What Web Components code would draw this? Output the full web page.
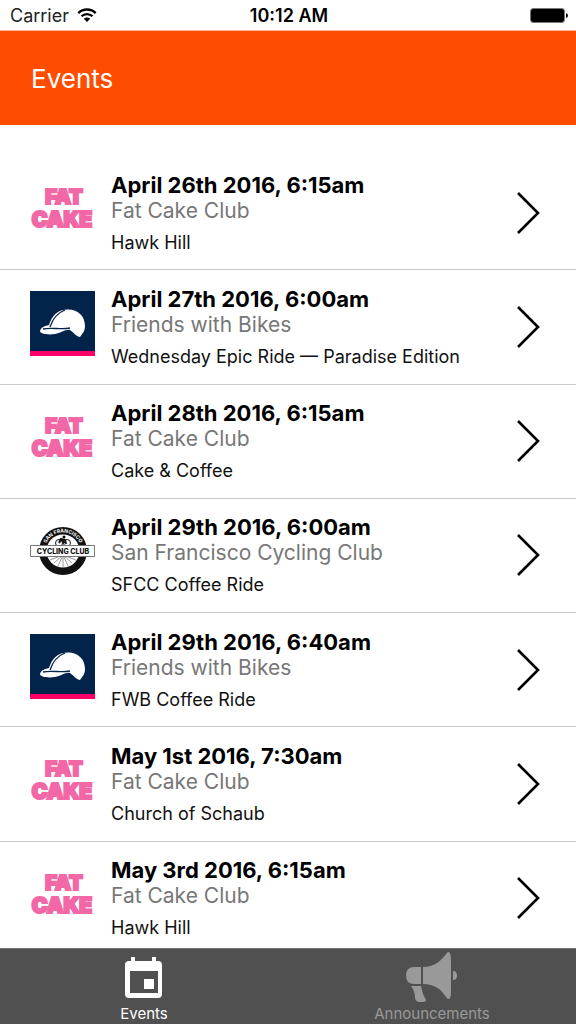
<!DOCTYPE html>
<html lang="en">
<head>
<meta charset="utf-8">
<meta name="viewport" content="width=device-width, initial-scale=1">
<title>Events</title>
<style>
  body { margin: 0; background: #fff; color: #000; font-family: Inter, "Liberation Sans", sans-serif; }
</style>
</head>
<body>
<events-app></events-app>

<script>
const define = (name, html, setup) => {
  const template = document.createElement('template');
  template.innerHTML = html;
  customElements.define(name, class extends HTMLElement {
    constructor() {
      super();
      this.attachShadow({ mode: 'open' }).append(template.content.cloneNode(true));
    }
    connectedCallback() {
      if (setup) setup(this, this.shadowRoot);
    }
  });
};

define('status-bar', `
  <style>
    :host { display: grid; grid-template-columns: 1fr auto 1fr; align-items: center; height: 30px; padding: 1px 8px 0 10px; box-sizing: border-box; font-size: 18px; line-height: 20px; }
    .carrier { display: flex; align-items: center; gap: 8px; color: #222; }
    .time { font-weight: 600; }
    .battery { justify-self: end; }
    svg { display: block; }
  </style>
  <div class="carrier"><span>Carrier</span>
    <svg width="20" height="15" viewBox="0 0 20 15" fill="none" stroke="#000" stroke-width="2.3" aria-label="Wi-Fi">
      <path d="M1.3 5.1a12.3 12.3 0 0 1 17.4 0M4.5 8.3a7.8 7.8 0 0 1 11 0"/>
      <path d="M6.8 10.8a4.5 4.5 0 0 1 6.4 0L10 14z" fill="#000" stroke="none"/>
    </svg>
  </div>
  <div class="time">10:12 AM</div>
  <svg class="battery" width="38" height="15" viewBox="0 0 38 15" aria-label="Battery full">
    <rect x=".5" y=".5" width="34" height="14" rx="2.5" fill="#fff" stroke="#777"/>
    <rect x="1" y="1" width="33" height="13" rx="2" fill="#000"/>
    <path d="M36 5q2 .5 2 2.500t-2 2.500z"/>
  </svg>`);

define('app-header', `
  <style>
    :host { display: block; padding: 33px 31px 31px; background: #ff4d00; color: #fff; border-top: 1px solid #ffb694; }
    h1 { margin: 0; font-size: 26px; line-height: 30px; font-weight: 400; }
  </style>
  <h1><slot></slot></h1>`);

const logos = {
  cake: `<svg viewBox="0 0 65 65" role="img" aria-label="Fat Cake">
    <g fill="#f267a5" stroke="#f267a5" stroke-width="2.200" font-family="Inter, sans-serif" font-weight="900" text-anchor="middle">
      <text x="34" y="27" font-size="20">FAT</text>
      <text x="32" y="50" font-size="21">CAKE</text>
    </g></svg>`,
  bikes: `<svg viewBox="0 0 65 65" role="img" aria-label="Cycling cap">
    <path fill="#02234a" d="M0 0h65v60H0z"/><path fill="#ff0068" d="M0 60h65v5H0z"/>
    <path fill="#fff" d="M10 40C11 36 15 35 19 34C22 25 27 19 37 18.500C48 18 55 25 55 35C55 40 53 42 50 46C47 46 44 42 40 39C36 38 31 42 25 43C18 44 10 43 10 40Z"/>
    <path d="M20 36C23 27 27 22 35 19M13 38C22 36 31 39 40 37" fill="none" stroke="#02234a" stroke-width="1.300"/></svg>`,
  sf: `<svg viewBox="0 0 65 65" role="img" aria-label="San Francisco Cycling Club">
    <circle cx="33" cy="31" r="24" fill="#111"/><circle cx="33" cy="31" r="16.500" fill="#fff"/>
    <path stroke="#999" d="M33 35v12M33 35l-5 11M33 35l5 11M33 35l-9 8M33 35l9 8M33 35l-13 5M33 35l13 5"/>
    <g fill="none" stroke="#111"><circle cx="29" cy="23" r="3.500"/><circle cx="37" cy="23" r="3.500"/><path stroke-width="2" d="M29 23l2-4 4 1 1 4M31 19l3 4"/></g><circle cx="34" cy="17" r="1.500"/>
    <path fill="#fff" stroke="#777" d="M.5 25.500h64v11H.5z"/>
    <path id="arc" d="M14.500 31a18.500 18.500 0 0 1 37 0" fill="none"/>
    <text font-size="5" font-weight="700" fill="#fff" text-anchor="middle"><textPath href="#arc" startOffset="50%">SAN FRANCISCO</textPath></text>
    <text x="33" y="34" font-size="7" font-weight="800" text-anchor="middle" fill="#111">CYCLING CLUB</text></svg>`
};

define('club-logo', `
  <style>
    :host { display: block; padding-bottom: 6px; }
    svg { display: block; width: 65px; height: 65px; }
  </style>
  <div></div>`, (host, root) => {
  root.querySelector('div').innerHTML = logos[host.getAttribute('club')];
});

define('event-row', `
  <style>
    :host { display: grid; border-bottom: 1px solid #c9c9c9; }
    a { display: grid; grid-template-columns: 65px 1fr 24px; column-gap: 16px; align-items: center; padding: 0 36px 0 30px; color: inherit; text-decoration: none; }
    .text { display: flex; flex-direction: column; padding-top: 2px; }
    ::slotted([slot=date]) { font-size: 22px; line-height: 26px; font-weight: 700; }
    ::slotted([slot=club]) { font-size: 21px; line-height: 26px; color: #777; }
    ::slotted([slot=name]) { margin-top: 6px; font-size: 18px; line-height: 26px; color: #111; }
    svg { display: block; }
  </style>
  <a href="#event">
    <slot name="logo"></slot>
    <div class="text"><slot name="date"></slot><slot name="club"></slot><slot name="name"></slot></div>
    <svg width="24" height="42" viewBox="0 0 24 42" fill="none" stroke="#000" stroke-width="2.600" aria-hidden="true"><path d="M2 1l20 20L2 41"/></svg>
  </a>`);

define('event-list', `
  <style>
    :host { display: grid; flex: 1; grid-auto-rows: minmax(114px, 1fr); padding: 31px 0 68px; }
  </style>
  <slot></slot>`);

define('tab-item', `
  <style>
    :host { display: block; color: #999; }
    :host([active]) { color: #fff; }
    a { display: flex; flex-direction: column; align-items: center; gap: 1px; padding-top: 3px; color: inherit; text-decoration: none; font-size: 15px; line-height: 18px; }
  </style>
  <a href="#tab"><slot name="icon"></slot><span><slot></slot></span></a>`);

define('tab-bar', `
  <style>
    :host { position: fixed; left: 0; right: 0; bottom: 0; display: grid; grid-template-columns: 1fr 1fr; height: 76px; background: #505050; border-top: 1px solid #777; box-sizing: border-box; }
    svg { display: block; }
  </style>
  <tab-item active>
    <svg slot="icon" width="52" height="52" viewBox="0 0 52 52" fill="currentColor"><path fill-rule="evenodd" d="M13 5h4v4h17V5h4v4h2q4 0 4 4v29q0 4-4 4H11q-4 0-4-4V13q0-4 4-4h2zM12 19v22h28V19zM26 27h10v10H26z"/></svg>
    Events
  </tab-item>
  <tab-item>
    <svg slot="icon" width="52" height="52" viewBox="0 0 52 52" fill="currentColor"><path d="M15 15v17H8Q0 32 0 23.500T8 15zM17 15C28 15 35 9 40 2Q41 0 43 0Q45 1 45 9V40Q45 46 43 47Q41 47 40 45C35 37 28 32 17 32zM47 19q4 0 4 4.500T47 28zM5 34H15Q16 38 17 42Q19 46 20 48Q20 50 16 50H13Q10 50 9 46Q9 39 5 34Z"/></svg>
    Announcements
  </tab-item>`);

const events = [
  ['cake', 'April 26th 2016, 6:15am', 'Fat Cake Club', 'Hawk Hill'],
  ['bikes', 'April 27th 2016, 6:00am', 'Friends with Bikes', 'Wednesday Epic Ride — Paradise Edition'],
  ['cake', 'April 28th 2016, 6:15am', 'Fat Cake Club', 'Cake &amp; Coffee'],
  ['sf', 'April 29th 2016, 6:00am', 'San Francisco Cycling Club', 'SFCC Coffee Ride'],
  ['bikes', 'April 29th 2016, 6:40am', 'Friends with Bikes', 'FWB Coffee Ride'],
  ['cake', 'May 1st 2016, 7:30am', 'Fat Cake Club', 'Church of Schaub'],
  ['cake', 'May 3rd 2016, 6:15am', 'Fat Cake Club', 'Hawk Hill']
];

define('events-app', `
  <style>
    :host { display: flex; flex-direction: column; min-height: 100vh; }
  </style>
  <status-bar></status-bar>
  <app-header>Events</app-header>
  <event-list>${events.map(([logo, date, club, name]) => `
    <event-row>
      <club-logo slot="logo" club="${logo}"></club-logo>
      <span slot="date">${date}</span>
      <span slot="club">${club}</span>
      <span slot="name">${name}</span>
    </event-row>`).join('')}
  </event-list>
  <tab-bar></tab-bar>`);
</script>
</body>
</html>
